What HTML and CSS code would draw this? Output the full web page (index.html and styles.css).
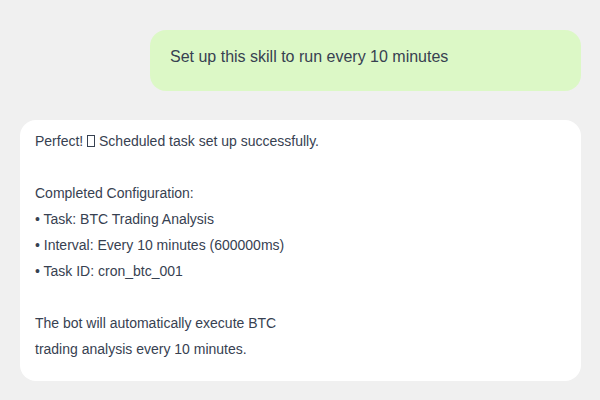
FILE: index.html
```html
<!DOCTYPE html>
<html>
<head>
<meta charset="utf-8">
<link rel="stylesheet" href="styles.css">
</head>
<body>
<div class="chat">
  <div class="row user-row">
    <div class="bubble user">Set up this skill to run every 10 minutes</div>
  </div>
  <div class="row bot-row">
    <div class="bubble bot">
      <div class="line">Perfect! <span class="tofu"></span> Scheduled task set up successfully.</div>
      <div class="line">&nbsp;</div>
      <div class="line">Completed Configuration:</div>
      <div class="line">• Task: BTC Trading Analysis</div>
      <div class="line">• Interval: Every 10 minutes (600000ms)</div>
      <div class="line">• Task ID: cron_btc_001</div>
      <div class="line">&nbsp;</div>
      <div class="line">The bot will automatically execute BTC</div>
      <div class="line">trading analysis every 10 minutes.</div>
    </div>
  </div>
</div>
</body>
</html>
```
FILE: styles.css
```css
html, body {
  margin: 0;
  padding: 0;
  background: #f0f0f0;
  width: 600px;
  height: 400px;
  overflow: hidden;
  font-family: "Liberation Sans", Arial, sans-serif;
  color: #374151;
}
.chat {
  display: flex;
  flex-direction: column;
  padding: 30px 19px 0 20px;
  gap: 29px;
}
.row {
  display: flex;
}
.user-row {
  justify-content: flex-end;
}
.bubble {
  border-radius: 16px;
  box-sizing: border-box;
}
.user {
  width: 431px;
  height: 61px;
  background: #dcf8c6;
  font-size: 16px;
  line-height: 26px;
  padding: 14px 20px 0 20px;
}
.bot {
  width: 561px;
  height: 261px;
  background: #ffffff;
  font-size: 14px;
  line-height: 26px;
  padding: 8px 15px 0 15px;
}
.tofu {
  display: inline-block;
  width: 6px;
  height: 10px;
  border: 1px solid #374151;
  vertical-align: -1px;
}
```
